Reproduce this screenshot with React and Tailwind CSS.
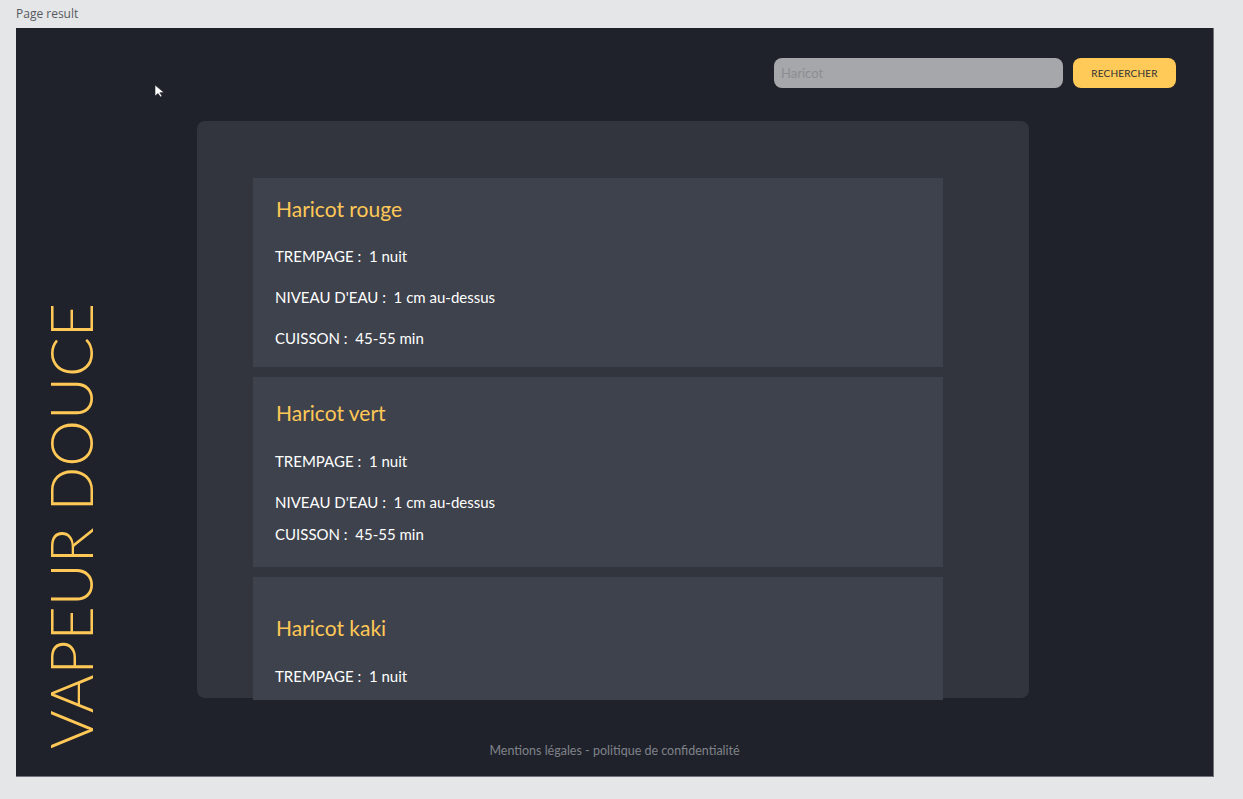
import React from "react";

const cards = [
  {
    title: "Haricot rouge",
    pt: "pt-[17px]",
    h: "h-[189px]",
    rows: [
      ["TREMPAGE :", "1 nuit", "mt-[21px]"],
      ["NIVEAU D'EAU :", "1 cm au-dessus", "mt-[17px]"],
      ["CUISSON :", "45-55 min", "mt-[17px]"],
    ],
  },
  {
    title: "Haricot vert",
    pt: "pt-[22px]",
    h: "h-[190px]",
    rows: [
      ["TREMPAGE :", "1 nuit", "mt-[22px]"],
      ["NIVEAU D'EAU :", "1 cm au-dessus", "mt-[17px]"],
      ["CUISSON :", "45-55 min", "mt-[8px]"],
    ],
  },
  {
    title: "Haricot kaki",
    pt: "pt-[37px]",
    h: "h-[130px]",
    rows: [["TREMPAGE :", "1 nuit", "mt-[22px]"]],
  },
];

export default function App() {
  return (
    <div className="w-[1243px] h-[799px] bg-[#e5e6e8] overflow-hidden" style={{ fontFamily: "Lato, 'Noto Sans', sans-serif" }}>
      <div className="h-[28px] pl-[16px] pt-[5px] text-[12px] leading-[18px] text-[#555a60]" style={{ fontFamily: "'Open Sans', sans-serif" }}>
        Page result
      </div>
      <div className="relative ml-[16px] w-[1198px] h-[749px] bg-[#1f222a] border-r border-b border-[#6f727a] flex flex-col">
        {/* cursor */}
        <svg className="absolute left-[138px] top-[56px]" width="12" height="14" viewBox="0 0 12 14">
          <path d="M1 1 L1 12 L4 9.5 L6.5 13 L8 12 L5.8 8.7 L10 8.5 Z" fill="#ffffff" stroke="#1f222a" strokeWidth="0.6" />
        </svg>
        {/* vertical title */}
        <div className="absolute left-[25px] top-[275px] h-[446px] w-[60px] flex items-center justify-center">
          <span className="[writing-mode:vertical-rl] rotate-180 text-[#ffc857] text-[59px] leading-[60px] font-light whitespace-nowrap">
            VAPEUR DOUCE
          </span>
        </div>
        {/* header */}
        <div className="flex justify-end items-center gap-[10px] pt-[30px] pr-[37px]">
          <input
            className="w-[289px] h-[30px] rounded-[8px] bg-[#a6a7ab] pl-[7px] text-[13px] text-[#3a3c40] placeholder:text-[#8c8d91] outline-none"
            placeholder="Haricot"
          />
          <button className="w-[103px] h-[30px] rounded-[8px] bg-[#ffca58] text-[10px] text-[#2e2f33] tracking-[0.2px]">
            RECHERCHER
          </button>
        </div>
        {/* panel */}
        <div className="mt-[33px] ml-[181px] w-[832px] h-[577px] rounded-[8px] bg-[#32353d] pt-[57px] pl-[56px]">
          <div className="h-[522px] w-[690px] overflow-hidden flex flex-col gap-[10px]">
            {cards.map((c, i) => (
              <div key={i} className={`shrink-0 bg-[#3e424c] ${c.h} ${c.pt} pl-[22px]`}>
                <div className="text-[21px] leading-[28px] text-[#ffc857] pl-[1px]">{c.title}</div>
                {c.rows.map((r, j) => (
                  <div key={j} className={`${r[2]} text-[15px] leading-[24px] text-white`}>
                    {r[0]}&nbsp; {r[1]}
                  </div>
                ))}
              </div>
            ))}
          </div>
        </div>
        {/* footer */}
        <div className="mt-auto pb-[17px] text-center text-[12.5px] leading-[16px] text-[#80838a]">
          Mentions légales - politique de confidentialité
        </div>
      </div>
    </div>
  );
}
